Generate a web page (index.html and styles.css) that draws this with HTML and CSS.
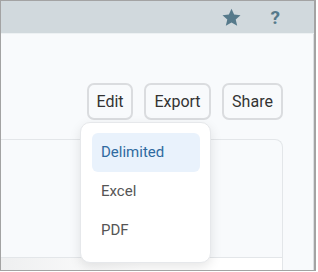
FILE: index.html
```html
<!DOCTYPE html>
<html>
<head>
    <title>Report</title>
    <link rel="stylesheet" href="styles.css">
</head>
<body>
    <div class="window">
        <div class="topbar">
            <svg class="icon" viewBox="0 0 24 24" width="21" height="21">
                <path d="M12 2l3 6.7 7.3.7-5.5 4.8 1.7 7.2L12 17.6l-6.5 3.8 1.7-7.2L1.7 9.4 9 8.7z" fill="#567a8b"/>
            </svg>
            <span class="help">?</span>
        </div>
        <div class="content">
            <div class="toolbar">
                <button class="btn btn-edit">Edit</button>
                <div class="menu-wrap">
                    <button class="btn btn-export">Export</button>
                    <ul class="menu">
                        <li class="active">Delimited</li>
                        <li>Excel</li>
                        <li>PDF</li>
                    </ul>
                </div>
                <button class="btn btn-share">Share</button>
            </div>
            <div class="panel">
                <div class="panel-body"></div>
                <div class="panel-foot"></div>
            </div>
        </div>
    </div>
</body>
</html>
```

FILE: styles.css
```css
body {
    margin: 0;
    background: #fff;
    font-family: Roboto, "Liberation Sans", sans-serif;
}
.window {
    width: 316px;
    height: 271px;
    box-sizing: border-box;
    border: 1px solid #a3a3a3;
    border-right: 2px solid #a3a3a3;
    display: flex;
    flex-direction: column;
    overflow: hidden;
}
.topbar {
    height: 32px;
    flex: none;
    background: #d1d9dd;
    border-bottom: 1px solid #edf1f3;
    display: flex;
    align-items: center;
    justify-content: flex-end;
    gap: 29px;
    padding-right: 34px;
}
.icon {
    display: block;
}
.help {
    font-weight: bold;
    font-size: 19px;
    color: #567a8b;
    line-height: 1;
}
.content {
    flex: 1;
    background: #f8fafc;
    border-right: 1px solid #dcdfe2;
    padding-right: 30px;
    display: flex;
    flex-direction: column;
}
.toolbar {
    display: flex;
    justify-content: flex-end;
    gap: 11px;
    margin-top: 49px;
}
.btn {
    height: 37px;
    padding: 0;
    border: 2px solid #dadcdf;
    border-radius: 7px;
    background: #f8fafc;
    font-family: Roboto, "Liberation Sans", sans-serif;
    font-size: 16px;
    color: #333;
}
.btn-edit {
    width: 46px;
}
.btn-export {
    width: 67px;
}
.btn-share {
    width: 61px;
}
.menu-wrap {
    position: relative;
}
.menu {
    position: absolute;
    top: 39px;
    right: 0;
    width: 131px;
    box-sizing: border-box;
    margin: 0;
    padding: 10px 10px 12px 11px;
    list-style: none;
    background: #fff;
    border: 1px solid #e6e8eb;
    border-radius: 10px;
    box-shadow: 0 4px 12px rgba(0, 0, 0, 0.1);
    z-index: 2;
}
.menu li {
    height: 39px;
    line-height: 39px;
    padding-left: 9px;
    border-radius: 6px;
    font-size: 15px;
    color: #555;
}
.menu li.active {
    background: #e9f2fc;
    color: #2f6aa0;
}
.panel {
    margin-top: 19px;
    flex: 1;
    border-top: 1px solid #e3e6e9;
    border-right: 1px solid #e3e6e9;
    border-top-right-radius: 8px;
    display: flex;
    flex-direction: column;
}
.panel-body {
    height: 117px;
    border-bottom: 1px solid #e3e6e9;
}
.panel-foot {
    flex: 1;
    background: linear-gradient(to right, #eeeff0, #ffffff 140px);
}
```
